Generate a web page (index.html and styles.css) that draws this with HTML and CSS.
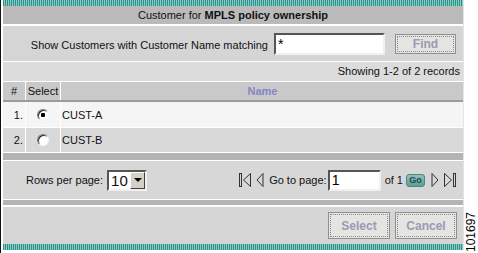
FILE: index.html
```html
<!doctype html>
<html lang="en">
  <head>
    <meta charset="UTF-8" />
    <title>Customer for MPLS policy ownership</title>
    <link rel="stylesheet" href="styles.css">
  </head>
  <body>
    <div class="page">
      <div class="frame">
        <div class="panel">
          <div class="stripe"></div>
          <div class="title">Customer for <b>MPLS policy ownership</b></div>
          <div class="search">
            <span class="search-label">Show Customers with Customer Name matching</span>
            <input type="text" class="text-field search-field" value="*" />
            <button class="btn find-button">Find</button>
          </div>
          <div class="records">Showing 1-2 of 2 records</div>
          <div class="grid">
            <div class="grid-row grid-head">
              <div class="cell cell-num">#</div>
              <div class="cell cell-select">Select</div>
              <div class="cell cell-name">Name</div>
            </div>
            <div class="grid-row row-light">
              <div class="cell cell-num">1.</div>
              <div class="cell cell-select"><span class="radio checked"></span></div>
              <div class="cell cell-name">CUST-A</div>
            </div>
            <div class="grid-row row-dark">
              <div class="cell cell-num">2.</div>
              <div class="cell cell-select"><span class="radio"></span></div>
              <div class="cell cell-name">CUST-B</div>
            </div>
          </div>
          <div class="sep"></div>
          <div class="pager">
            <div class="rows-per-page">
              Rows per page:
              <div class="combo">
                <span class="combo-value">10</span>
                <span class="combo-arrow"></span>
              </div>
            </div>
            <div class="goto">
              <svg class="nav-icon nav-first" width="14" height="16" viewBox="0 0 14 16">
                <rect x="1.5" y="1.5" width="2" height="13" fill="none" stroke="#333" />
                <polygon points="12.5,1.5 5.5,8 12.5,14.5" fill="none" stroke="#333" />
              </svg>
              <svg class="nav-icon nav-prev" width="8" height="16" viewBox="0 0 8 16">
                <polygon points="7,1.5 1,8 7,14.5" fill="none" stroke="#333" />
              </svg>
              <span class="goto-label">Go to page:</span>
              <input type="text" class="text-field page-field" value="1" />
              <span class="of-label">of 1</span>
              <button class="go-button">Go</button>
              <svg class="nav-icon nav-next" width="8" height="16" viewBox="0 0 8 16">
                <polygon points="1,1.5 7,8 1,14.5" fill="none" stroke="#333" />
              </svg>
              <svg class="nav-icon" width="14" height="16" viewBox="0 0 14 16">
                <polygon points="1.5,1.5 8.5,8 1.5,14.5" fill="none" stroke="#333" />
                <rect x="10.5" y="1.5" width="2" height="13" fill="none" stroke="#333" />
              </svg>
            </div>
          </div>
          <div class="sep sep-low"></div>
          <div class="actions">
            <button class="btn action-button">Select</button>
            <button class="btn action-button">Cancel</button>
          </div>
          <div class="stripe"></div>
        </div>
      </div>
      <div class="figure-id">101697</div>
    </div>
  </body>
</html>
```

FILE: styles.css
```css
body {
  margin: 0;
  background-color: #fff;
  font-family: "Liberation Sans", Arial, sans-serif;
  font-size: 11px;
  color: #111;
}

.page {
  display: flex;
  height: 253px;
}

.frame {
  border-left: 1px solid #111;
  padding-left: 2px;
}

.panel {
  width: 460px;
  border-right: 1px solid #e4e4e4;
  display: flex;
  flex-direction: column;
}

.stripe {
  height: 6px;
  background: repeating-linear-gradient(90deg, #2f8f89 0 1px, #86cbc4 1px 2px);
}

.title {
  height: 18px;
  line-height: 18px;
  text-align: center;
  background-color: #bababa;
  border-bottom: 2px solid #fff;
}

.search {
  height: 35px;
  display: flex;
  align-items: center;
  justify-content: flex-end;
  padding-right: 7px;
  background-color: #d5d5d5;
  border-bottom: 1px solid #fff;
}

.search-label {
  margin-right: 6px;
  padding-top: 3px;
}

.text-field {
  box-sizing: border-box;
  height: 22px;
  padding: 0 2px;
  font-family: "Liberation Sans", Arial, sans-serif;
  font-size: 14px;
  color: #000;
  background-color: #fff;
  border-style: solid;
  border-width: 2px;
  border-color: #555 #f0f0f0 #f0f0f0 #555;
}

.search-field {
  width: 111px;
  margin-right: 10px;
}

.btn {
  box-sizing: border-box;
  font-family: "Liberation Sans", Arial, sans-serif;
  font-size: 12px;
  font-weight: bold;
  color: #9a9ab6;
  background-color: #e4e4e0;
  border: 1px solid #8f8f8f;
  outline: 1px dotted #8a8a8a;
  outline-offset: -3px;
  padding: 0;
}

.find-button {
  width: 61px;
  height: 20px;
}

.records {
  height: 19px;
  line-height: 19px;
  text-align: right;
  padding-right: 3px;
  background-color: #dcdcdc;
  border-bottom: 1px solid #fff;
}

.grid-row {
  display: flex;
}

.cell {
  display: flex;
  align-items: center;
}

.cell-num {
  width: 23px;
  justify-content: flex-end;
  padding-right: 2px;
  box-sizing: border-box;
  border-right: 1px solid #fff;
}

.cell-select {
  width: 34px;
  justify-content: center;
  border-right: 1px solid #fff;
}

.cell-name {
  flex: 1;
  padding-left: 1px;
}

.grid-head {
  height: 18px;
  background-color: #c9c9c9;
  border-bottom: 2px solid #9c9c9c;
}

.grid-head .cell-num {
  justify-content: center;
  padding-right: 0;
}

.grid-head .cell-name {
  justify-content: center;
  font-weight: bold;
  color: #8585c4;
}

.row-light {
  height: 25px;
  background-color: #f5f5f5;
  border-bottom: 1px solid #fff;
}

.row-dark {
  height: 24px;
  background-color: #d9d9d9;
}

.radio {
  box-sizing: border-box;
  width: 12px;
  height: 12px;
  border-radius: 50%;
  border: 1px solid;
  border-color: #7a7a7a #f4f4f4 #f4f4f4 #7a7a7a;
  background: #fff;
  box-shadow: inset 1px 1px 0 #2a2a2a;
}

.radio.checked {
  background: radial-gradient(circle, #000 0 2px, #fff 2.5px);
}

.sep {
  height: 7px;
  background-color: #b4b4b4;
  border-top: 1px solid #fff;
  border-bottom: 1px solid #fff;
}

.sep-low {
  height: 5px;
  border-bottom-width: 2px;
}

.pager {
  height: 38px;
  display: flex;
  align-items: center;
  justify-content: space-between;
  padding: 0 6px 0 23px;
  background-color: #d7d7d7;
}

.rows-per-page {
  display: flex;
  align-items: center;
  gap: 4px;
}

.combo {
  box-sizing: border-box;
  width: 40px;
  height: 21px;
  display: flex;
  background-color: #fff;
  border-style: solid;
  border-width: 2px;
  border-color: #555 #f0f0f0 #f0f0f0 #555;
}

.combo-value {
  flex: 1;
  font-size: 15px;
  line-height: 17px;
  padding-left: 2px;
}

.combo-arrow {
  box-sizing: border-box;
  width: 15px;
  background-color: #d4d0c8;
  border-style: solid;
  border-width: 1px;
  border-color: #fff #404040 #404040 #fff;
  display: flex;
  align-items: center;
  justify-content: center;
}

.combo-arrow::after {
  content: "";
  border-left: 4px solid transparent;
  border-right: 4px solid transparent;
  border-top: 4px solid #000;
}

.goto {
  display: flex;
  align-items: center;
}

.nav-first {
  margin-right: 4px;
}

.nav-prev {
  margin-right: 5px;
}

.goto-label {
  margin-right: 1px;
}

.page-field {
  width: 53px;
  height: 21px;
}

.of-label {
  margin-left: 4px;
  margin-right: 3px;
}

.go-button {
  box-sizing: border-box;
  width: 19px;
  height: 13px;
  margin-right: 6px;
  padding: 0;
  font-family: "Liberation Sans", Arial, sans-serif;
  font-size: 9px;
  font-weight: bold;
  line-height: 11px;
  color: #1d4b48;
  background: linear-gradient(#8fc2bd, #5f9d98);
  border: 1px solid #4f8580;
  border-radius: 3px;
}

.nav-next {
  margin-right: 4px;
}

.actions {
  height: 37px;
  display: flex;
  align-items: center;
  justify-content: flex-end;
  gap: 5px;
  padding-right: 6px;
  background-color: #d5d5d5;
}

.action-button {
  width: 62px;
  height: 27px;
}

.figure-id {
  writing-mode: vertical-rl;
  transform: rotate(180deg);
  align-self: flex-end;
  margin-left: 1px;
  margin-bottom: 1px;
  font-size: 12px;
  line-height: 13px;
  color: #000;
}
```
